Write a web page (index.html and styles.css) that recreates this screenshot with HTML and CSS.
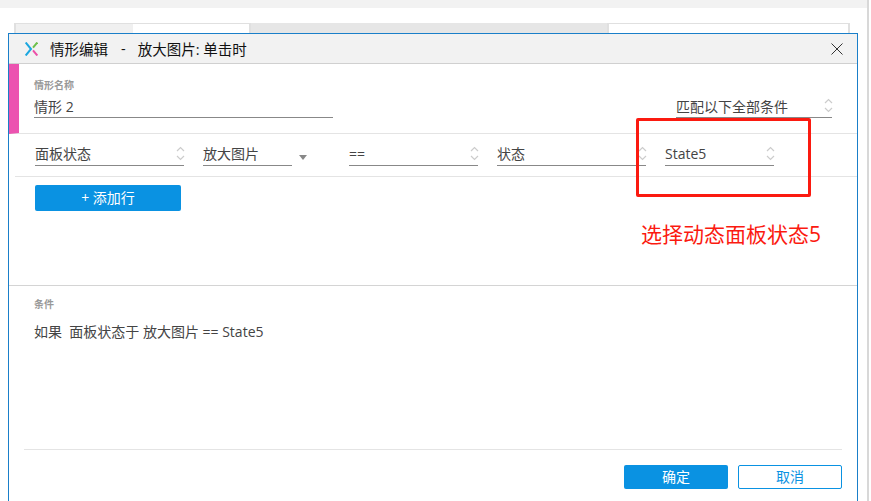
FILE: index.html
```html
<!DOCTYPE html>
<html lang="zh-CN">
<head>
    <meta charset="UTF-8">
    <title>情形编辑</title>
    <link rel="stylesheet" href="styles.css">
</head>
<body>

<div class="page">
    <div class="top-strip"></div>

    <div class="tabs">
        <div class="tab tab-a"></div>
        <div class="tab tab-b"></div>
        <div class="tab tab-c"></div>
        <div class="tab tab-d"></div>
    </div>

    <div class="dialog">
        <div class="title-bar">
            <svg class="logo" width="13" height="14" viewBox="0 0 13 14">
                <path d="M0.7 0.5 L6 7 L0.7 13.5" fill="none" stroke="#1ba7e0" stroke-width="2"/>
                <path d="M12.3 0.5 L8 5.7" fill="none" stroke="#6cc04a" stroke-width="2"/>
                <path d="M8 8.3 L12.3 13.5" fill="none" stroke="#ec4fa8" stroke-width="2"/>
            </svg>
            <span class="title-text">情形编辑</span>
            <span class="title-dash">-</span>
            <span class="title-text">放大图片: 单击时</span>
            <svg class="close" width="12" height="12" viewBox="0 0 12 12">
                <path d="M0.5 0.5 L11.5 11.5 M11.5 0.5 L0.5 11.5" stroke="#333" stroke-width="1" fill="none"/>
            </svg>
        </div>

        <div class="name-section">
            <div class="name-field">
                <div class="small-label">情形名称</div>
                <div class="name-value">情形 2</div>
            </div>
            <div class="match-field">
                <span>匹配以下全部条件</span>
                <svg class="updown" width="9" height="15" viewBox="0 0 9 15"><path d="M1 5 L4.5 1.5 L8 5 M1 10 L4.5 13.5 L8 10" fill="none" stroke="#ccc" stroke-width="1.2"/></svg>
            </div>
        </div>

        <div class="rule-row">
            <div class="sel sel-type">
                <span>面板状态</span>
                <svg class="updown" width="9" height="15" viewBox="0 0 9 15"><path d="M1 5 L4.5 1.5 L8 5 M1 10 L4.5 13.5 L8 10" fill="none" stroke="#ccc" stroke-width="1.2"/></svg>
            </div>
            <div class="sel sel-target"><span>放大图片</span></div>
            <div class="caret"></div>
            <div class="sel sel-op">
                <span>==</span>
                <svg class="updown" width="9" height="15" viewBox="0 0 9 15"><path d="M1 5 L4.5 1.5 L8 5 M1 10 L4.5 13.5 L8 10" fill="none" stroke="#ccc" stroke-width="1.2"/></svg>
            </div>
            <div class="sel sel-kind">
                <span>状态</span>
                <svg class="updown" width="9" height="15" viewBox="0 0 9 15"><path d="M1 5 L4.5 1.5 L8 5 M1 10 L4.5 13.5 L8 10" fill="none" stroke="#ccc" stroke-width="1.2"/></svg>
            </div>
            <div class="sel sel-state">
                <span>State5</span>
                <svg class="updown" width="9" height="15" viewBox="0 0 9 15"><path d="M1 5 L4.5 1.5 L8 5 M1 10 L4.5 13.5 L8 10" fill="none" stroke="#ccc" stroke-width="1.2"/></svg>
            </div>
        </div>

        <div class="add-section">
            <button class="btn btn-add" type="button">+ 添加行</button>
        </div>

        <div class="cond-section">
            <div class="small-label">条件</div>
            <div class="cond-text">如果&nbsp; 面板状态于 放大图片 == State5</div>
        </div>

        <div class="footer">
            <button class="btn btn-ok" type="button">确定</button>
            <button class="btn btn-cancel" type="button">取消</button>
        </div>

        <div class="red-box"></div>
        <div class="red-note">选择动态面板状态5</div>
    </div>
</div>

</body>
</html>
```

FILE: styles.css
```css
* {
    box-sizing: border-box;
}
body {
    margin: 0;
    height: 501px;
    overflow: hidden;
    background: white;
    font-family: "Open Sans", "Noto Sans CJK SC", sans-serif;
    color: #444;
}
.page {
    width: 869px;
    height: 501px;
    border-right: 2px solid #d8d8d8;
}
.top-strip {
    height: 8px;
    background: #f2f2f2;
}
.tabs {
    display: flex;
    height: 10px;
    margin: 15px 17px 0 14px;
}
.tab {
    border-top: 1px solid #e0e0e0;
    border-right: 2px solid #e0e0e0;
}
.tab-a {
    width: 119px;
    background: #f0f0f0;
    border-left: 2px solid #e0e0e0;
    border-right: 0;
}
.tab-b {
    width: 118px;
    background: white;
}
.tab-c {
    width: 358px;
    background: #e6e6e6;
    border-top: 0;
}
.tab-d {
    flex: 1;
    background: white;
}
.dialog {
    position: relative;
    width: 850px;
    height: 468px;
    margin-left: 8px;
    background: white;
    border: 1px solid #1a7fc9;
    border-bottom: 0;
}
.title-bar {
    display: flex;
    align-items: center;
    height: 30px;
    padding: 0 14px 0 16px;
    background: #f2f2f2;
    border-bottom: 1px solid #d0d0d0;
    color: #111;
    font-size: 14.5px;
}
.logo {
    margin-right: 12px;
}
.title-dash {
    margin: 0 12px 0 13px;
}
.close {
    margin-left: auto;
}
.updown {
    margin-right: -1px;
}
.name-section {
    display: flex;
    justify-content: space-between;
    height: 70px;
    padding: 15px 25px 0 15px;
    border-left: 10px solid #ec53b0;
    border-bottom: 1px solid #e4e4e4;
}
.small-label {
    font-size: 10px;
    font-weight: bold;
    color: #999;
    line-height: 13px;
}
.name-field {
    width: 299px;
}
.name-value {
    margin-top: 5px;
    height: 21px;
    border-bottom: 1px solid #888;
    font-size: 14px;
    line-height: 20px;
}
.match-field {
    display: flex;
    justify-content: space-between;
    align-items: center;
    width: 156px;
    height: 21px;
    margin-top: 18px;
    padding-bottom: 3px;
    border-bottom: 1px solid #888;
    font-size: 14px;
}
.rule-row {
    display: flex;
    height: 43px;
    margin-left: 6px;
    padding: 11px 0 0 20px;
    border-bottom: 1px solid #e4e4e4;
}
.sel {
    display: flex;
    justify-content: space-between;
    align-items: center;
    height: 21px;
    padding-bottom: 4px;
    border-bottom: 1px solid #888;
    font-size: 14px;
}
.sel-type {
    width: 149px;
    margin-right: 19px;
}
.sel-target {
    width: 89px;
}
.caret {
    width: 0;
    height: 0;
    margin: 10px 42px 0 7px;
    border-left: 4px solid transparent;
    border-right: 4px solid transparent;
    border-top: 5px solid #888;
}
.sel-op {
    width: 129px;
    margin-right: 19px;
}
.sel-kind {
    width: 149px;
    margin-right: 19px;
}
.sel-state {
    width: 109px;
}
.add-section {
    height: 109px;
    padding: 8px 0 0 26px;
    border-bottom: 1px solid #d4d4d4;
}
.btn {
    border-radius: 2px;
    font-family: "Open Sans", "Noto Sans CJK SC", sans-serif;
    font-size: 14px;
    padding: 0 0 2px;
}
.btn-add {
    display: block;
    width: 146px;
    height: 26px;
    background: #0a92e2;
    border: 0;
    color: white;
}
.cond-section {
    height: 163px;
    padding: 12px 25px 0 25px;
}
.cond-text {
    margin-top: 12px;
    font-size: 14px;
    line-height: 18px;
}
.footer {
    display: flex;
    justify-content: flex-end;
    gap: 10px;
    height: 52px;
    margin: 0 15px;
    padding-top: 15px;
    border-top: 1px solid #e4e4e4;
}
.btn-ok {
    width: 104px;
    height: 24px;
    background: #0a92e2;
    border: 0;
    color: white;
}
.btn-cancel {
    width: 104px;
    height: 24px;
    background: white;
    border: 1px solid #0a92e2;
    color: #0a92e2;
}
.red-box {
    position: absolute;
    left: 627px;
    top: 84px;
    width: 175px;
    height: 79px;
    border: 3px solid #fb1a10;
    border-radius: 2px;
}
.red-note {
    position: absolute;
    left: 632px;
    top: 186px;
    color: #fb1a10;
    font-size: 21px;
    line-height: 28px;
    white-space: nowrap;
}
```
